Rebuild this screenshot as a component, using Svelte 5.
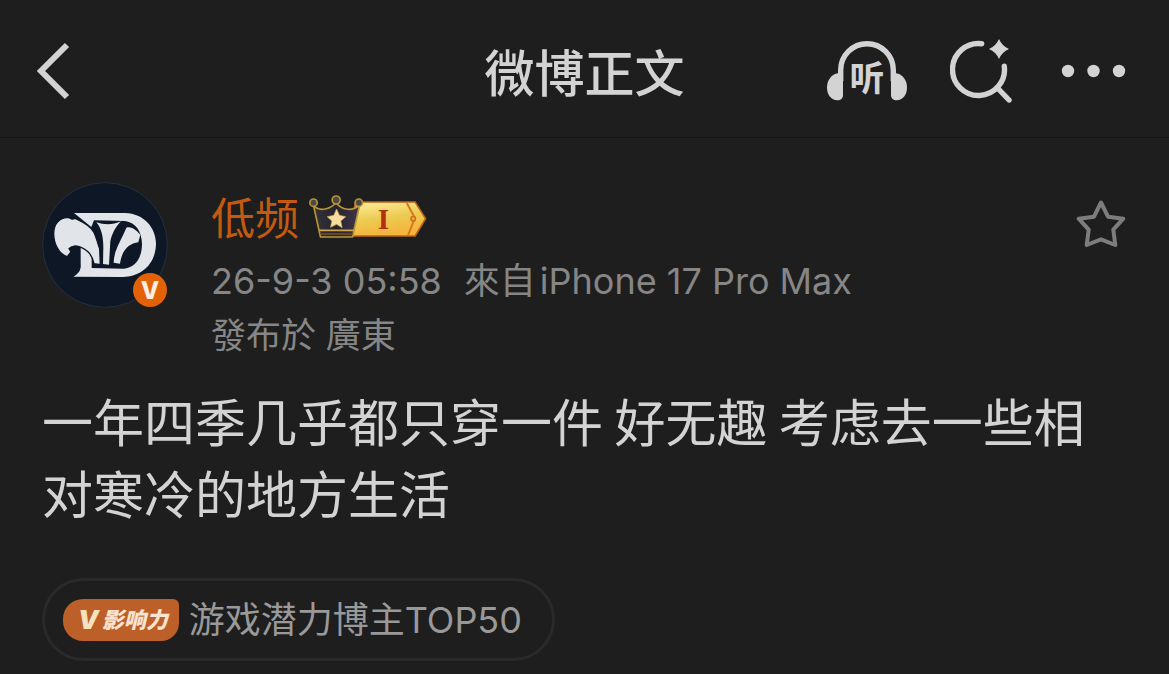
<script lang="ts">
  type Post = {
    author: string;
    time: string;
    device: string;
    region: string;
    text: string;
    rank: string;
  };

  const post: Post = {
    author: '低频',
    time: '26-9-3 05:58',
    device: 'iPhone 17 Pro Max',
    region: '廣東',
    text: '一年四季几乎都只穿一件 好无趣 考虑去一些相对寒冷的地方生活',
    rank: '游戏潜力博主TOP50',
  };

  let starred = $state(false);
</script>

<header class="topbar">
  <button type="button" class="icon-btn back" aria-label="返回">
    <svg width="34" height="58" viewBox="0 0 34 58" fill="none" stroke="currentColor" stroke-width="6">
      <path d="M31 3 L5 29 L31 55" />
    </svg>
  </button>

  <h1>微博正文</h1>

  <div class="actions">
    <button type="button" class="icon-btn" aria-label="听微博">
      <svg width="80" height="60" viewBox="0 0 80 60" fill="none">
        <path d="M13.7 40 V29 A26.3 26.3 0 0 1 66.3 29 V40" stroke="currentColor" stroke-width="5.4" />
        <path d="M16 32 V54 C16 57.500 13.500 59.300 10.500 59.300 C4 59.300 0 53.500 0 46.500 C0 39 4.500 33.300 11 32.300 Z" fill="currentColor" />
        <path d="M64 32 V54 C64 57.500 66.500 59.300 69.500 59.300 C76 59.300 80 53.500 80 46.500 C80 39 75.500 33.300 69 32.300 Z" fill="currentColor" />
        <text class="listen" x="40" y="50" text-anchor="middle">听</text>
      </svg>
    </button>
    <button type="button" class="icon-btn" aria-label="搜索">
      <svg width="62" height="64" viewBox="0 0 62 64" fill="none" stroke="currentColor" stroke-width="5.4" stroke-linecap="round">
        <path d="M31.700 4.700 A26 26 0 1 0 54.300 27.300" />
        <path d="M47.500 49 L59 61" />
        <path d="M49 0 Q52 7 59 10 Q52 13 49 20 Q46 13 39 10 Q46 7 49 0 Z" fill="currentColor" stroke="none" />
      </svg>
    </button>
    <button type="button" class="icon-btn" aria-label="更多">
      <svg width="71" height="14" viewBox="0 0 71 14" fill="currentColor">
        <circle cx="13" cy="7" r="6.200" />
        <circle cx="38.500" cy="7" r="6.200" />
        <circle cx="64" cy="7" r="6.200" />
      </svg>
    </button>
  </div>
</header>

<main class="post">
  <div class="author">
    <a class="avatar" href="#profile" aria-label={post.author}>
      <svg width="126" height="126" viewBox="66 36 378 378">
        <circle cx="255" cy="225" r="187" fill="#0d1726" stroke="#26303b" stroke-width="3" />
        <g fill="#e1e4e9">
          <path
            fill-rule="evenodd"
            d="M162 129 L315 129 C372 131 407 172 408 220 C408 279 367 320 308 321 L160 320 C176 311 184 299 182 282 V225 L215 245 V294 L310 296 C347 294 366 263 366 221 C365 184 348 158 315 153 L222 151 L214 171 Z"
          />
          <path
            stroke="#0d1726"
            stroke-width="4"
            d="M101 191 C101 162 119 142 144 143 C154 144 157 151 165 145 C184 154 211 165 222 187 C230 203 232 219 239 236 L241 284 L222 281 C218 259 205 242 185 233 C169 225 154 227 147 236 L153 246 L142 260 C116 253 101 220 101 191 Z"
          />
          <path d="M229 157 C252 165 278 166 303 154 C286 172 276 191 271 214 L267 284 L249 282 L250 231 C250 201 244 174 229 157 Z" />
          <path d="M319 173 C334 168 348 180 361 194 L355 217 C328 220 306 239 300 281 L281 278 C282 238 303 214 319 173 Z" />
        </g>
      </svg>
      <svg class="verified" width="34" height="34" viewBox="0 0 34 34">
        <circle cx="17" cy="17" r="17" fill="#e36207" />
        <text x="17" y="26" text-anchor="middle">V</text>
      </svg>
    </a>

    <div class="meta">
      <div class="name-row">
        <a class="name" href="#profile">{post.author}</a>
        <svg width="119" height="44" viewBox="24 28 356 132" role="img" aria-label="会员等级 I">
          <defs>
            <linearGradient id="gold" x1="0" y1="0" x2="0.3" y2="1">
              <stop offset="0" stop-color="#fff0a0" />
              <stop offset="0.55" stop-color="#eccb52" />
              <stop offset="1" stop-color="#f5b43c" />
            </linearGradient>
            <linearGradient id="dark" x1="0" y1="0" x2="1" y2="0">
              <stop offset="0" stop-color="#343337" />
              <stop offset="0.5" stop-color="#24242e" />
              <stop offset="1" stop-color="#41344a" />
            </linearGradient>
          </defs>
          <path d="M166 49 H345 L376 99 L345 151 H150 Z" fill="url(#gold)" stroke="#bd6619" stroke-width="5" />
          <path d="M320 52 L344 97 L324 148" fill="none" stroke="#d8791f" stroke-width="6" />
          <circle cx="339" cy="99" r="7" fill="#edac40" stroke="#c86b1b" stroke-width="4" />
          <text class="level" x="250" y="130" text-anchor="middle">I</text>
          <path
            d="M40 59 C53 76 82 76 108 52 C128 76 158 76 178 59 L157 154 H61 Z"
            fill="url(#dark)"
            stroke="#b99439"
            stroke-width="5"
            stroke-linejoin="round"
          />
          <path d="M58 134 H161" stroke="#d0a34e" stroke-width="5" />
          <path d="M61 145 H157" stroke="#65461f" stroke-width="6" />
          <g fill="#4a4943" stroke="#b99439" stroke-width="5">
            <circle cx="40" cy="51" r="11" />
            <circle cx="108" cy="43" r="12" />
            <circle cx="176" cy="51" r="11" />
          </g>
          <path d="M109 70 L118 89 L137 93 L122 106 L126 126 L109 116 L91 125 L95 106 L81 93 L101 89 Z" fill="#f8dda0" stroke="#dca04b" stroke-width="2" />
        </svg>
      </div>
      <p class="source"><time>{post.time}</time><span>來自<b>{post.device}</b></span></p>
      <p class="region">發布於 {post.region}</p>
    </div>

    <button
      type="button"
      class="icon-btn star"
      aria-label="收藏"
      aria-pressed={starred}
      onclick={() => (starred = !starred)}
    >
      <svg width="50" height="48" viewBox="0 0 50 48" fill={starred ? 'currentColor' : 'none'} stroke="currentColor" stroke-width="4" stroke-linejoin="round">
        <path d="M25 2.500 L32 16.700 L47.300 18.700 L37.300 29.700 L39.300 45 L25 39.300 L10.700 45 L12.700 29.700 L2.700 18.700 L18 16.700 Z" />
      </svg>
    </button>
  </div>

  <p class="text">{post.text}</p>

  <a class="chip" href="#rank">
    <span class="influence"><i>V</i>影响力</span>
    <span>{post.rank}</span>
  </a>
</main>

<style>
  :global(body) {
    background: #1e1e1e;
    color: #d3d3d3;
    font-family: Inter, 'Noto Sans CJK SC', sans-serif;
  }
  h1, p { margin: 0; }
  a { color: inherit; text-decoration: none; }
  svg { display: block; }
  .icon-btn {
    padding: 0;
    border: 0;
    background: none;
    color: inherit;
    cursor: pointer;
  }
  .topbar {
    display: grid;
    grid-template-columns: 1fr auto 1fr;
    align-items: center;
    box-sizing: border-box;
    min-height: 138px;
    padding: 5px 43px 0;
    border-bottom: 1px solid #161616;
  }
  .back {
    justify-self: start;
    margin-left: -7px;
  }
  h1 {
    padding-top: 6px;
    font-size: 50px;
    line-height: 72px;
    font-weight: 500;
  }
  .actions {
    display: flex;
    justify-content: flex-end;
    align-items: center;
    gap: 43px;
  }
  .listen {
    font-family: 'Noto Sans CJK SC', sans-serif;
    font-size: 35px;
    font-weight: 700;
    fill: currentColor;
  }
  .post { padding: 44px 42px 13px; }
  .author {
    display: flex;
    align-items: flex-start;
  }
  .avatar {
    position: relative;
    flex: none;
    margin-right: 43px;
  }
  .verified {
    position: absolute;
    right: 1px;
    bottom: 1px;
  }
  .verified text {
    font-size: 24px;
    font-weight: 800;
    fill: #fbeee2;
  }
  .meta { flex: 1; }
  .name-row {
    display: flex;
    align-items: center;
    gap: 9px;
    height: 70px;
  }
  .name {
    padding-top: 4px;
    color: #c45a10;
    font-size: 44px;
    line-height: 66px;
  }
  .level {
    font-family: 'Liberation Serif', serif;
    font-size: 88px;
    font-weight: 700;
    fill: #b52d12;
  }
  .source, .region {
    color: #868686;
    font-family: Inter, 'Noto Sans CJK TC', sans-serif;
    font-size: 35px;
    line-height: 54px;
  }
  .source {
    display: flex;
    flex-wrap: wrap;
    column-gap: 22px;
    padding-top: 2px;
    font-size: 36px;
  }
  .source b {
    margin-left: 4px;
    font-weight: 400;
  }
  .star {
    margin: 18px 1px 0 0;
    color: #7d7d7d;
  }
  .text {
    margin-top: 22px;
    font-family: 'Noto Sans CJK SC', sans-serif;
    font-size: 51px;
    line-height: 72px;
  }
  .chip {
    display: inline-flex;
    align-items: center;
    gap: 10px;
    box-sizing: border-box;
    min-height: 83px;
    margin-top: 50px;
    padding: 0 30px 0 18px;
    border: 3px solid #2a2a2a;
    border-radius: 42px;
    color: #999;
    font-size: 36px;
    line-height: 54px;
  }
  .influence {
    display: flex;
    align-items: center;
    padding: 0 11px 0 15px;
    border-radius: 20px 6px 18px 20px;
    background: #bd5f29;
    color: #f7e3cf;
    font-size: 22px;
    line-height: 42px;
    font-style: italic;
    font-weight: 900;
  }
  .influence i {
    margin-right: 3px;
    color: #f4e3bd;
    font-size: 26px;
  }
</style>
